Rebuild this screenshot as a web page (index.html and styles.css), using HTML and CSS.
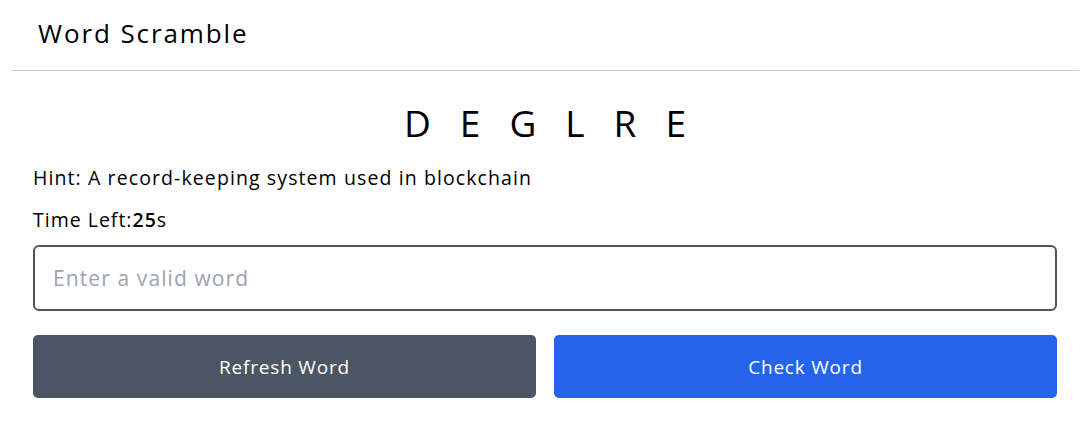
FILE: index.html
```html
<!DOCTYPE html>
<html lang="en">
<head>
<meta charset="utf-8">
<title>Word Scramble</title>
<link rel="stylesheet" href="styles.css">
</head>
<body>
<div class="app">
  <header class="header">
    <h1 class="title">Word Scramble</h1>
  </header>
  <main class="content">
    <p class="word">DEGLRE</p>
    <p class="hint">Hint: A record-keeping system used in blockchain</p>
    <p class="timer">Time Left:<b>25</b>s</p>
    <input class="field" type="text" placeholder="Enter a valid word">
    <div class="actions">
      <button class="btn btn-refresh" type="button">Refresh Word</button>
      <button class="btn btn-check" type="button">Check Word</button>
    </div>
  </main>
</div>
</body>
</html>
```
FILE: styles.css
```css
* { box-sizing: border-box; }
html, body { margin: 0; background: #fff; }
body {
  font-family: "Open Sans", "DejaVu Sans", sans-serif;
  color: #000;
}
.app {
  margin: 0 11px;
}
.header {
  height: 71px;
  border-bottom: 1px solid #cfcfcf;
  padding: 16px 0 0 27px;
}
.title {
  margin: 0;
  font-size: 26px;
  font-weight: 500;
  line-height: 34px;
  letter-spacing: 1.9px;
}
.content {
  padding: 0 22px;
  display: flex;
  flex-direction: column;
}
.word {
  margin: 29px 0 0;
  text-align: center;
  font-size: 37px;
  font-weight: 500;
  line-height: 46px;
  letter-spacing: 29px;
  padding-left: 29px;
}
.hint {
  margin: 18px 0 0;
  font-size: 19.5px;
  line-height: 28px;
  letter-spacing: 1.1px;
}
.timer {
  margin: 14px 0 0;
  font-size: 19.5px;
  line-height: 28px;
  letter-spacing: 1px;
}
.timer b { font-weight: 600; }
.field {
  margin-top: 11px;
  height: 66px;
  width: 100%;
  border: 2px solid #4b5563;
  border-radius: 6px;
  padding: 0 18px;
  font-family: inherit;
  font-size: 21px;
  letter-spacing: 1.1px;
  color: #111;
  outline: none;
}
.field::placeholder { color: #9ca3af; }
.actions {
  margin-top: 24px;
  display: grid;
  grid-template-columns: 1fr 1fr;
  gap: 18px;
}
.btn {
  height: 63px;
  border: none;
  border-radius: 5px;
  color: #fff;
  font-family: inherit;
  font-size: 19px;
  letter-spacing: 0.8px;
  cursor: pointer;
}
.btn-refresh { background: #4b5563; }
.btn-check { background: #2563eb; }
```
